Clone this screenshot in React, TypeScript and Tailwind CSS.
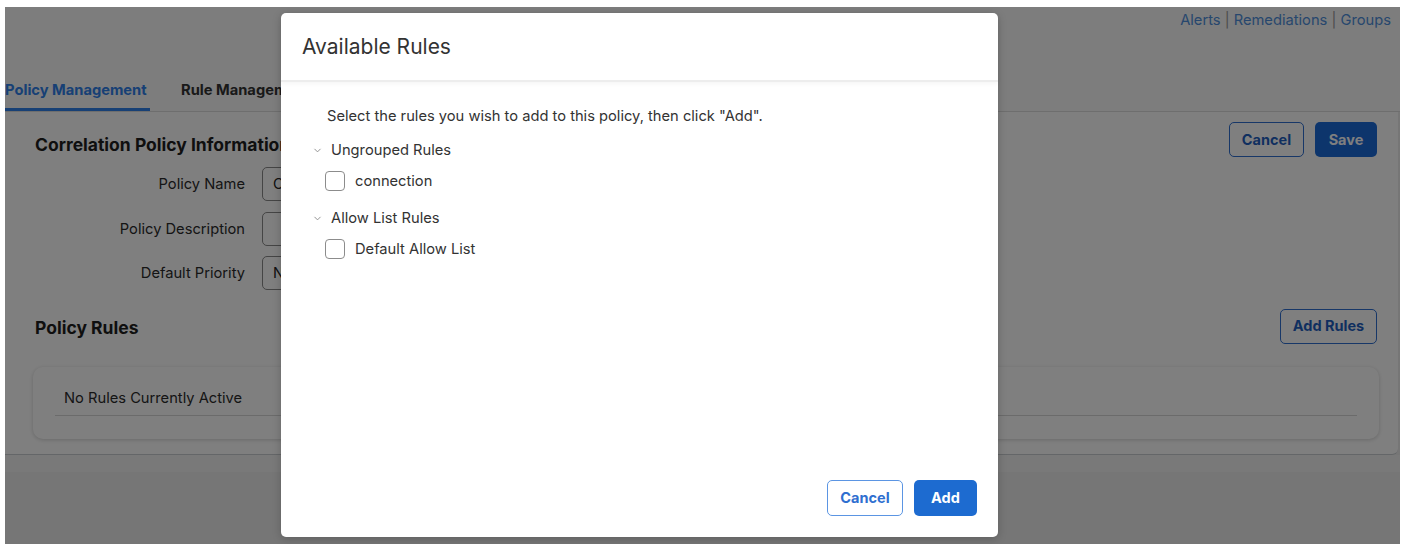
import { ChevronDown } from "lucide-react";

const font = { fontFamily: "Inter, 'Noto Sans', sans-serif" };

function FormRow(props: { label: string; value?: string }) {
  return (
    <div className="flex h-[44.5px] items-center">
      <div className="w-[210px] text-right text-[14.7px] text-[#2b2b2b]">{props.label}</div>
      <div className="ml-[17px] flex h-[34px] w-[420px] items-center rounded-[5px] border border-[#8a8a8a] bg-white px-[10px] text-[14.7px] text-[#222]">
        {props.value}
      </div>
    </div>
  );
}

function RuleGroup(props: { title: string; items: string[]; first?: boolean }) {
  return (
    <div className={props.first ? "mt-[12px]" : "mt-[15px]"}>
      <div className="flex h-[22px] items-center">
        <ChevronDown className="h-[11px] w-[11px] text-[#8a8a8a]" strokeWidth={2} />
        <span className="ml-[8px] text-[14.7px] text-[#333]">{props.title}</span>
      </div>
      {props.items.map((item) => (
        <div key={item} className="mt-[9px] flex h-[22px] items-center pl-[13px]">
          <span className="h-[20px] w-[20px] shrink-0 rounded-[4px] border-[1.5px] border-[#8c8c8c] bg-white" />
          <span className="ml-[10px] text-[14.7px] text-[#333]">{item}</span>
        </div>
      ))}
    </div>
  );
}

function PolicyPage() {
  return (
    <div className="flex h-full flex-col bg-[#ececec]">
      {/* top header with links and tabs */}
      <div className="relative h-[104px] bg-[#fafafa]">
        <div className="absolute right-[9px] top-[2px] text-[14.7px] text-[#4f8fdc]">
          Alerts <span className="text-[#999]">|</span> Remediations{" "}
          <span className="text-[#999]">|</span> Groups
        </div>
        <div className="absolute bottom-0 left-0 flex items-end gap-[31px]">
          <div className="flex h-[32px] w-[145px] flex-col justify-between">
            <span className="text-[14.7px] font-bold text-[#2f80ea]">Policy Management</span>
            <span className="h-[3px] bg-[#2f80ea]" />
          </div>
          <div className="h-[32px] text-[14.7px] font-bold text-[#333]">Rule Management</div>
        </div>
      </div>
      <div className="h-px bg-[#dcdcdc]" />

      {/* policy panel */}
      <div className="mr-[2px] h-[343px] rounded-br-[6px] border-b border-[#c8cdd0] bg-white px-[30px] pt-[10px]">
        <div className="flex h-[35px] items-center justify-between">
          <h2 className="pt-[11px] text-[17.5px] font-bold text-[#1e1e1e]">Correlation Policy Information</h2>
          <div className="mr-[-9px] flex gap-[11px]">
            <button className="h-[35px] w-[75px] rounded-[5px] border-[1.5px] border-[#2f6fd0] text-[14.5px] font-bold text-[#1f5fc0]">
              Cancel
            </button>
            <button className="h-[35px] w-[62px] rounded-[5px] bg-[#1a6ad8] text-[14.5px] font-bold text-white">
              Save
            </button>
          </div>
        </div>
        <div className="mt-[5px]">
          <FormRow label="Policy Name" value="Cisco" />
          <FormRow label="Policy Description" />
          <FormRow label="Default Priority" value="None" />
        </div>
        <div className="mt-[13px] flex h-[35px] items-center justify-between">
          <h2 className="pt-[5px] text-[17.5px] font-bold text-[#1e1e1e]">Policy Rules</h2>
          <button className="mr-[-9px] h-[35px] w-[97px] rounded-[5px] border-[1.5px] border-[#2f6fd0] text-[14.5px] font-bold text-[#1f5fc0]">
            Add Rules
          </button>
        </div>
        <div className="mr-[-11px] ml-[-2px] mt-[23px] h-[72px] rounded-[10px] bg-white px-[22px] pt-[20px] shadow-[0_1px_4px_rgba(0,0,0,0.18)]">
          <div className="border-b border-[#d6d6d6] pb-[6px] pl-[9px] text-[14.7px] text-[#2b2b2b]">
            No Rules Currently Active
          </div>
        </div>
      </div>
      <div className="h-[17px] bg-[#f2f2f2]" />
    </div>
  );
}

export default function App() {
  return (
    <div className="h-[544px] w-[1404px] bg-white pl-[5px] pt-[7px]" style={font}>
      <div className="relative h-[537px] w-[1395px] overflow-hidden">
        <PolicyPage />
        <div className="absolute inset-0 bg-black/50" />

        {/* Available Rules dialog */}
        <div className="absolute left-[276px] top-[6px] flex h-[524px] w-[717px] flex-col rounded-[5px] bg-white shadow-[0_2px_10px_rgba(0,0,0,0.2)]">
          <div className="flex h-[69px] items-center border-b-[2px] border-[#ededed] px-[21px] shadow-[0_2px_4px_rgba(0,0,0,0.04)]">
            <h1 className="text-[21px] font-normal text-[#333]">Available Rules</h1>
          </div>
          <div className="flex-1 px-[31px] pt-[23px]">
            <p className="pl-[15px] text-[14.7px] text-[#333]">
              Select the rules you wish to add to this policy, then click "Add".
            </p>
            <RuleGroup title="Ungrouped Rules" items={["connection"]} first />
            <RuleGroup title="Allow List Rules" items={["Default Allow List"]} />
          </div>
          <div className="flex justify-end gap-[11px] px-[21px] pb-[21px]">
            <button className="h-[36px] w-[76px] rounded-[5px] border-[1.5px] border-[#5b95e3] text-[14.5px] font-bold text-[#2f6fd0]">
              Cancel
            </button>
            <button className="h-[36px] w-[63px] rounded-[5px] bg-[#1d6bd0] text-[14.5px] font-bold text-white">
              Add
            </button>
          </div>
        </div>
      </div>
    </div>
  );
}
